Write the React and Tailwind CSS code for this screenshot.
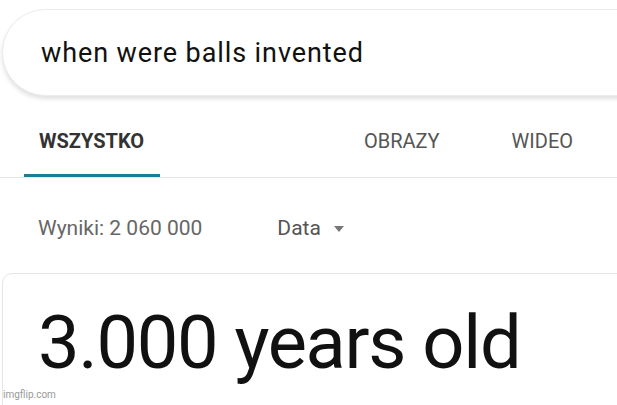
import React from 'react';

// Search result header mock
export default function App() {
  return (
    <div className="relative w-[617px] h-[405px] overflow-hidden bg-white" style={{ fontFamily: 'Roboto, "Liberation Sans", sans-serif' }}>
      <div className="pt-[9px] pl-[2px]">
        <div className="h-[87px] w-[700px] rounded-l-full bg-white border border-[#ececec] shadow-[0_3px_4px_rgba(0,0,0,0.12)] flex items-center pl-[38px] pt-[2px]">
          <span className="text-[27px] text-[#111] tracking-[0.9px]">when were balls invented</span>
        </div>
      </div>

      <div className="mt-[13px] border-b border-[#e6e6e6]">
        <div className="flex h-[68px] items-stretch text-[20px]">
          <div className="ml-[24px] w-[136px] flex flex-col">
            <div className="flex-1 flex items-center pl-[15px] pb-[2px] font-bold text-[#333]">WSZYSTKO</div>
            <div className="h-[3px] bg-[#1a7f94]" />
          </div>
          <div className="ml-[204px] flex items-center text-[#555] pb-[5px]">OBRAZY</div>
          <div className="ml-[72px] flex items-center text-[#555] pb-[5px]">WIDEO</div>
        </div>
      </div>

      <div className="flex items-center h-[95px] pl-[38px] pt-[7px] text-[21px] text-[#666]">
        <span>Wyniki: 2 060 000</span>
        <span className="ml-[75px] text-[#555]">Data</span>
        <svg className="ml-[13px]" width="10" height="6" viewBox="0 0 10 6"><path d="M0 0h10L5 6z" fill="#777" /></svg>
      </div>

      <div className="ml-[2px] w-[700px] h-[200px] rounded-tl-[10px] border border-[#e6e6e6] pl-[35px] pt-[32px]">
        <div className="text-[74px] leading-none text-[#111] tracking-[-1.3px]">3.000 years old</div>
      </div>

      <div className="absolute left-[3px] bottom-[3px] text-[10px] text-[#999]">imgflip.com</div>
    </div>
  );
}
